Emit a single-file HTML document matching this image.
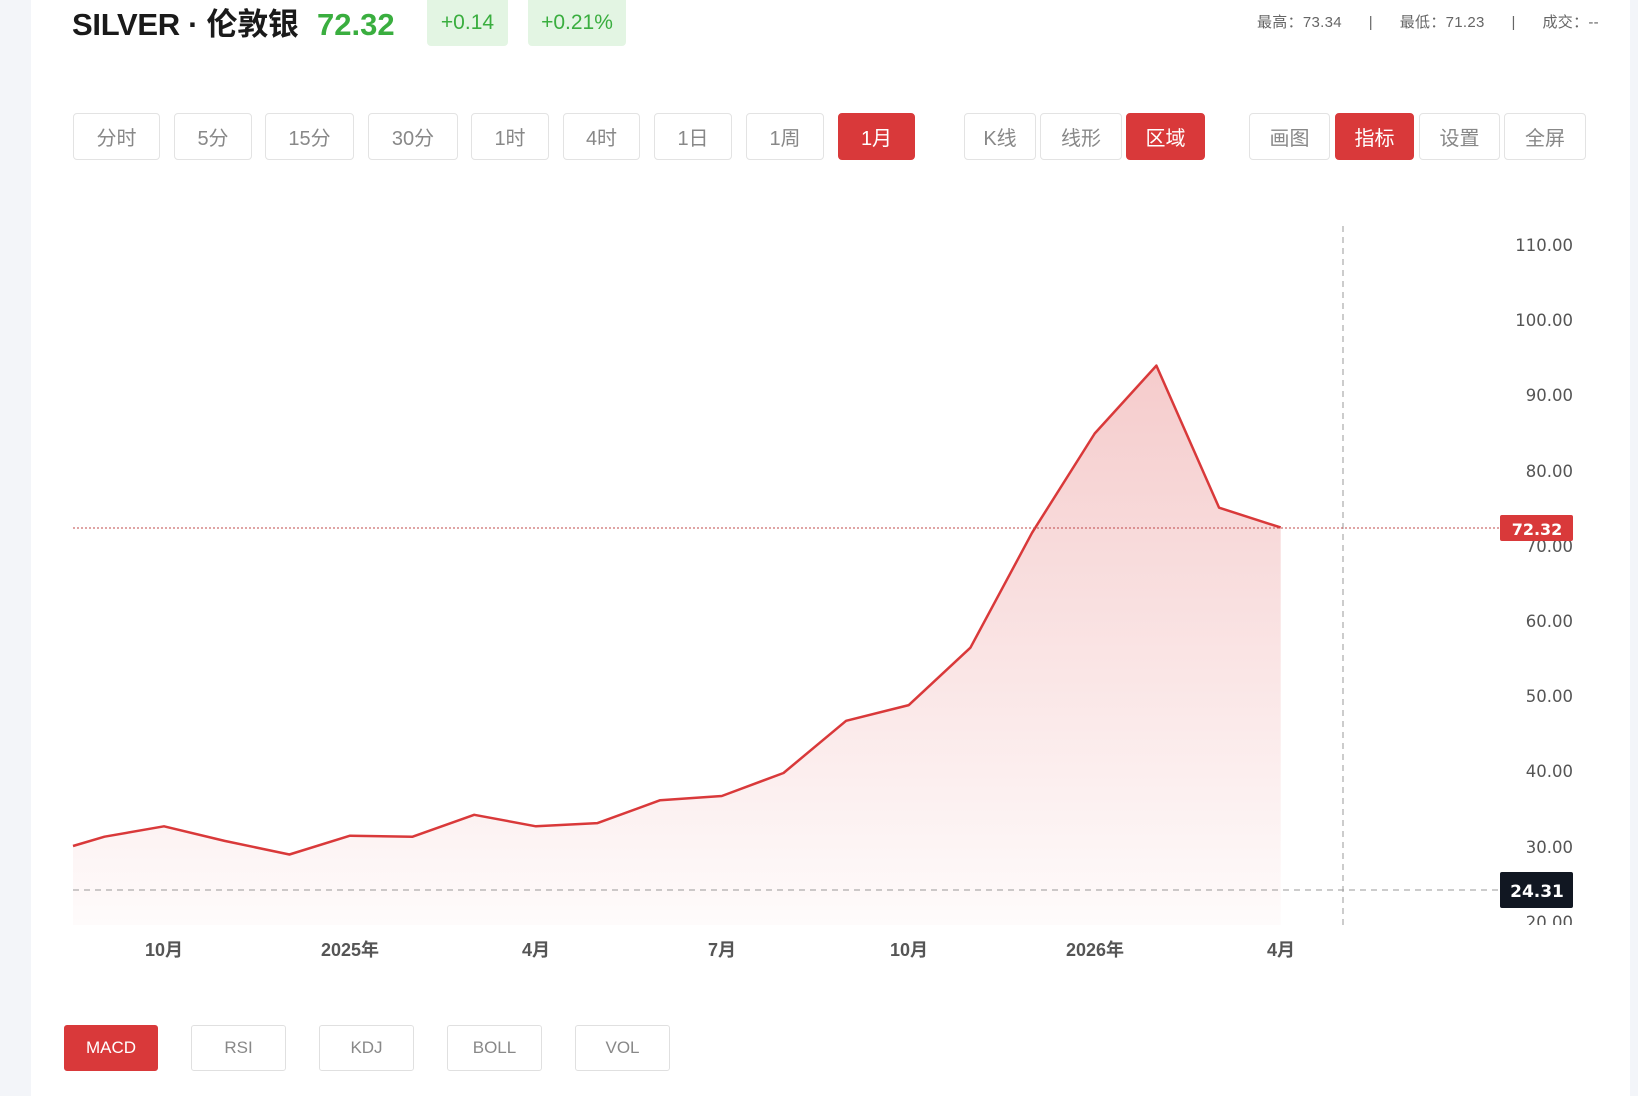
<!DOCTYPE html>
<html><head><meta charset="utf-8"><style>
*{margin:0;padding:0;box-sizing:border-box}
body{width:1638px;height:1096px;background:#fff;font-family:"Liberation Sans","Noto Sans CJK SC",sans-serif;position:relative;overflow:hidden}
.lg{position:absolute;left:0;top:0;width:31px;height:1096px;background:#f3f5f9;z-index:5}
.rg{position:absolute;right:0;top:0;width:8px;height:1096px;background:#f3f5f9;z-index:5}
.a{position:absolute}
.btn{position:absolute;top:113px;height:47px;border:1px solid #e3e3e3;border-radius:4px;color:#888;font-size:20px;display:flex;align-items:center;justify-content:center;background:#fff}
.ib{position:absolute;top:1025px;height:46px;border:1px solid #e0e0e0;border-radius:3px;color:#888;font-size:17px;display:flex;align-items:center;justify-content:center}
.btn.on,.ib.on{background:#d9393a;border-color:#d9393a;color:#fff}
.badge{position:absolute;top:0;height:46px;background:#e3f5e3;color:#3aae3f;font-size:21px;border-radius:0 0 4px 4px;display:flex;align-items:center;justify-content:center}
</style></head><body>
<div class="lg"></div><div class="rg"></div>
<div class="a" style="left:72px;top:5px;font-size:31px;font-weight:bold;color:#1a1a1a;line-height:40px;letter-spacing:-0.3px">SILVER · 伦敦银</div>
<div class="a" style="left:317px;top:5px;font-size:31px;font-weight:bold;color:#3aae3f;line-height:40px">72.32</div>
<div class="badge" style="left:427px;width:81px">+0.14</div>
<div class="badge" style="left:528px;width:98px">+0.21%</div>
<div class="a" style="left:1257px;top:13px;font-size:15px;color:#666;line-height:20px;white-space:pre;letter-spacing:0.3px">最高：73.34      |      最低：71.23      |      成交：--</div>

<div class="btn" style="left:73px;width:87px">分时</div>
<div class="btn" style="left:174px;width:78px">5分</div>
<div class="btn" style="left:265px;width:89px">15分</div>
<div class="btn" style="left:368px;width:90px">30分</div>
<div class="btn" style="left:471px;width:78px">1时</div>
<div class="btn" style="left:563px;width:77px">4时</div>
<div class="btn" style="left:654px;width:78px">1日</div>
<div class="btn" style="left:746px;width:78px">1周</div>
<div class="btn on" style="left:838px;width:77px">1月</div>
<div class="btn" style="left:964px;width:72px">K线</div>
<div class="btn" style="left:1040px;width:82px">线形</div>
<div class="btn on" style="left:1126px;width:79px">区域</div>
<div class="btn" style="left:1249px;width:81px">画图</div>
<div class="btn on" style="left:1335px;width:79px">指标</div>
<div class="btn" style="left:1419px;width:81px">设置</div>
<div class="btn" style="left:1504px;width:82px">全屏</div>

<svg class="a" style="left:0;top:0" width="1638" height="1096">
<defs><linearGradient id="g" gradientUnits="userSpaceOnUse" x1="0" y1="365" x2="0" y2="925">
<stop offset="0" stop-color="#d9393a" stop-opacity="0.26"/><stop offset="1" stop-color="#d9393a" stop-opacity="0.02"/></linearGradient></defs>
<path d="M73,846 L104.5,836.7 L164,826.3 L224.6,840.9 L289.4,854.5 L350,835.7 L412.6,836.7 L474.2,814.8 L535.9,826.3 L597.5,823.1 L660.2,800.2 L721.8,796 L783.5,773 L846.1,720.8 L908.8,705.1 L970.4,647.7 L1032.1,532.7 L1094.7,433.5 L1156.4,365.6 L1219.1,507.7 L1280.7,527.5 L1280.7,925 L73,925 Z" fill="url(#g)"/>
<path d="M73,846 L104.5,836.7 L164,826.3 L224.6,840.9 L289.4,854.5 L350,835.7 L412.6,836.7 L474.2,814.8 L535.9,826.3 L597.5,823.1 L660.2,800.2 L721.8,796 L783.5,773 L846.1,720.8 L908.8,705.1 L970.4,647.7 L1032.1,532.7 L1094.7,433.5 L1156.4,365.6 L1219.1,507.7 L1280.7,527.5" fill="none" stroke="#d9393a" stroke-width="2.5" stroke-linejoin="round"/>
<line x1="1343" y1="226" x2="1343" y2="925" stroke="#999" stroke-dasharray="6,5"/>
<line x1="73" y1="528" x2="1500" y2="528" stroke="#c0494a" stroke-dasharray="2,2"/>
<line x1="73" y1="890" x2="1500" y2="890" stroke="#999" stroke-dasharray="6,5"/>
<g font-family="DejaVu Sans, sans-serif" font-size="16.5" fill="#555" text-anchor="end">
<text x="1573" y="251">110.00</text><text x="1573" y="326">100.00</text><text x="1573" y="401">90.00</text><text x="1573" y="477">80.00</text><text x="1573" y="552">70.00</text><text x="1573" y="627">60.00</text><text x="1573" y="702">50.00</text><text x="1573" y="777">40.00</text><text x="1573" y="853">30.00</text><text x="1573" y="928">20.00</text>
</g>
<rect x="31" y="925" width="1599" height="20" fill="#fff"/>
<rect x="1500" y="515" width="73" height="26" rx="2" fill="#d9393a"/>
<text x="1537" y="535" font-family="DejaVu Sans, sans-serif" font-size="16" font-weight="bold" fill="#fff" text-anchor="middle">72.32</text>
<rect x="1500" y="872" width="73" height="36" rx="2" fill="#111722"/>
<text x="1537" y="897" font-family="DejaVu Sans, sans-serif" font-size="17" font-weight="bold" fill="#fff" text-anchor="middle">24.31</text>
<g font-family="Liberation Sans, Noto Sans CJK SC, sans-serif" font-size="18" fill="#555" font-weight="bold" text-anchor="middle">
<text x="164" y="956">10月</text><text x="350" y="956">2025年</text><text x="536" y="956">4月</text><text x="722" y="956">7月</text><text x="909" y="956">10月</text><text x="1095" y="956">2026年</text><text x="1281" y="956">4月</text>
</g>
</svg>

<div class="ib on" style="left:64px;width:94px">MACD</div>
<div class="ib" style="left:191px;width:95px">RSI</div>
<div class="ib" style="left:319px;width:95px">KDJ</div>
<div class="ib" style="left:447px;width:95px">BOLL</div>
<div class="ib" style="left:575px;width:95px">VOL</div>
</body></html>
